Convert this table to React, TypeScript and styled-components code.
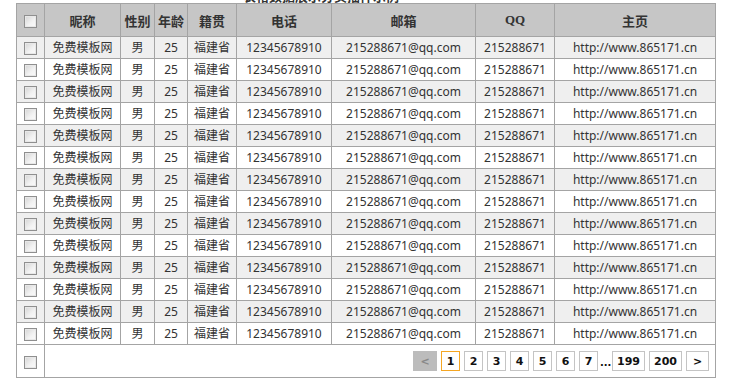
import styled, { createGlobalStyle } from "styled-components";

const GlobalStyle = createGlobalStyle`
  html, body {
    margin: 0;
    padding: 0;
    background: #fff;
    overflow: hidden;
  }
  body {
    font-family: "Noto Sans", "Noto Sans CJK SC", sans-serif;
    color: #333;
  }
`;

const Page = styled.div`
  padding: 0 0 0 16px;
  width: 733px;
  height: 390px;
  overflow: hidden;
  box-sizing: border-box;
`;

const Title = styled.h3`
  margin: -12px 0 0 227px;
  height: 15px;
  font-size: 13px;
  line-height: 15px;
  font-weight: bold;
  color: #333;
  font-family: "Noto Sans CJK SC", sans-serif;
  white-space: nowrap;
`;

const Table = styled.table`
  width: 699px;
  table-layout: fixed;
  border-collapse: collapse;
  border: 1px solid #a4a4a4;
  font-size: 12px;
`;

const HeadCell = styled.th`
  height: 32px;
  padding: 0;
  background: #c6c6c6;
  border: 1px solid #a4a4a4;
  font-family: "Liberation Serif", "Noto Sans CJK SC", serif;
  font-weight: bold;
  font-size: 13px;
  color: #333;
  text-align: center;
`;

const Row = styled.tr<{ $alt: boolean }>`
  background: ${(p) => (p.$alt ? "#efefef" : "#fff")};
`;

const Cell = styled.td`
  height: 21px;
  padding: 0;
  border: 1px solid #a4a4a4;
  text-align: center;
  line-height: 21px;
  white-space: nowrap;
  overflow: hidden;
  color: #333;
`;

const FootCell = styled.td<{ $pad?: boolean }>`
  height: 32px;
  padding: 0 ${(p) => (p.$pad ? "6px" : "0")} 0 0;
  border: 1px solid #a4a4a4;
  text-align: center;
  background: #fff;
`;

const Check = styled.span`
  display: inline-block;
  vertical-align: middle;
  width: 11px;
  height: 11px;
  border: 1px solid #8f8f8f;
  background: linear-gradient(135deg, #d4d4d4 0%, #f3f3f3 60%, #fafafa 100%);
  box-shadow: inset 0 0 0 1px #e8e8e8;
`;

const Pager = styled.div`
  display: flex;
  justify-content: flex-end;
  align-items: center;
  gap: 4px;
`;

const PageBtn = styled.span<{ $w?: number; $current?: boolean; $disabled?: boolean }>`
  display: inline-flex;
  align-items: center;
  justify-content: center;
  box-sizing: border-box;
  width: ${(p) => p.$w ?? 19}px;
  height: 20px;
  border: 1px solid
    ${(p) => (p.$current ? "#f5a623" : p.$disabled ? "#bcbcbc" : "#c4c4c4")};
  background: ${(p) => (p.$disabled ? "#bcbcbc" : "#fff")};
  color: ${(p) => (p.$disabled ? "#888" : "#111")};
  font-family: "DejaVu Sans", sans-serif;
  font-weight: bold;
  font-size: 11px;
`;

const Ellipsis = styled.span`
  width: 10px;
  margin: 0 -2px;
  font-family: "DejaVu Sans", sans-serif;
  font-weight: bold;
  font-size: 10px;
  color: #111;
  align-self: flex-end;
  padding-bottom: 3px;
`;

const widths = [28, 76, 34, 33, 49, 95, 144, 79, 161];
const headers = ["", "昵称", "性别", "年龄", "籍贯", "电话", "邮箱", "QQ", "主页"];
const pages = ["2", "3", "4", "5", "6", "7"];

export default function App() {
  const rows = Array.from({ length: 14 }, (_, i) => i);
  return (
    <Page>
      <GlobalStyle />
      <Title>表格数据展示分页插件示例</Title>
      <Table>
        <colgroup>
          {widths.map((w, i) => (
            <col key={i} style={{ width: w }} />
          ))}
        </colgroup>
        <thead>
          <tr>
            {headers.map((h, i) => (
              <HeadCell key={i}>{i === 0 ? <Check /> : h}</HeadCell>
            ))}
          </tr>
        </thead>
        <tbody>
          {rows.map((i) => (
            <Row key={i} $alt={i % 2 === 0}>
              <Cell>
                <Check />
              </Cell>
              <Cell>免费模板网</Cell>
              <Cell>男</Cell>
              <Cell>25</Cell>
              <Cell>福建省</Cell>
              <Cell>12345678910</Cell>
              <Cell>215288671@qq.com</Cell>
              <Cell>215288671</Cell>
              <Cell>http://www.865171.cn</Cell>
            </Row>
          ))}
          <tr>
            <FootCell>
              <Check />
            </FootCell>
            <FootCell colSpan={8} $pad>
              <Pager>
                <PageBtn $w={24} $disabled>&lt;</PageBtn>
                <PageBtn $current>1</PageBtn>
                {pages.map((p) => (
                  <PageBtn key={p}>{p}</PageBtn>
                ))}
                <Ellipsis>...</Ellipsis>
                <PageBtn $w={33}>199</PageBtn>
                <PageBtn $w={33}>200</PageBtn>
                <PageBtn $w={23}>&gt;</PageBtn>
              </Pager>
            </FootCell>
          </tr>
        </tbody>
      </Table>
    </Page>
  );
}
